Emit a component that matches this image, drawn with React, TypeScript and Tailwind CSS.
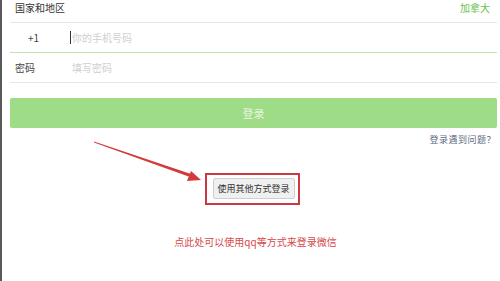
import React from 'react';

const font = { fontFamily: '"Noto Sans CJK SC", "Noto Sans", sans-serif' };

export default function App() {
  return (
    <div
      className="relative h-[281px] w-[500px] overflow-hidden border-l-[2px] border-[#5a5a5a] bg-white"
      style={font}
    >
      <div className="flex flex-col pl-[8px] pr-[3px]">
        {/* country row */}
        <div className="flex h-[23px] items-start justify-between border-b border-[#e6e6e6] pl-[5px] pr-[7px] pt-[1px]">
          <span className="text-[10px] leading-[13px] text-[#333]">国家和地区</span>
          <span className="text-[10px] leading-[13px] text-[#6cbf4c]">加拿大</span>
        </div>

        {/* phone row */}
        <div className="flex h-[30px] items-center border-b border-[#bfe6ab]">
          <span className="w-[60px] pl-[18px] text-[10px] text-[#444]">+1</span>
          <span className="mr-[1px] h-[13px] w-px bg-[#333]" />
          <span className="text-[10px] text-[#cfcfcf]">你的手机号码</span>
        </div>

        {/* password row */}
        <div className="flex h-[30px] items-center border-b border-[#e6e6e6]">
          <span className="w-[62px] pl-[5px] text-[10px] text-[#444]">密码</span>
          <span className="text-[10px] text-[#cfcfcf]">填写密码</span>
        </div>

        <button className="mt-[15px] flex h-[30px] items-center justify-center rounded-[2px] bg-[#9edc87] text-[11px] text-[#e4f5dc]">
          登录
        </button>

        <div className="mt-[6px] flex justify-end pr-[1px]">
          <span className="text-[9px] leading-[12px] tracking-[0.5px] text-[#5d6a80]">登录遇到问题？</span>
        </div>

        <div className="mt-[27px] flex justify-center pr-[3px]">
          <div className="border-[2px] border-[#c9393f] pb-[4px] pl-[6px] pr-[3px] pt-[3px]">
            <div className="flex h-[21px] w-[82px] items-center justify-center rounded-[2px] border border-[#cfcfcf] bg-[#f0f0f0] text-[9px] text-[#333]">
              使用其他方式登录
            </div>
          </div>
        </div>

        <div className="mt-[30px] flex justify-center pl-[4px]">
          <span className="text-[10px] leading-[13px] text-[#d64a4a]">点此处可以使用qq等方式来登录微信</span>
        </div>
      </div>

      {/* annotation arrow */}
      <svg className="absolute left-0 top-0" width="500" height="281" viewBox="0 0 500 281">
        <polygon points="92,141.5 189,174 188,177 92,142.5" fill="#d33a3a" />
        <polygon points="199,180 185,181 189,171" fill="#d33a3a" />
      </svg>
    </div>
  );
}
